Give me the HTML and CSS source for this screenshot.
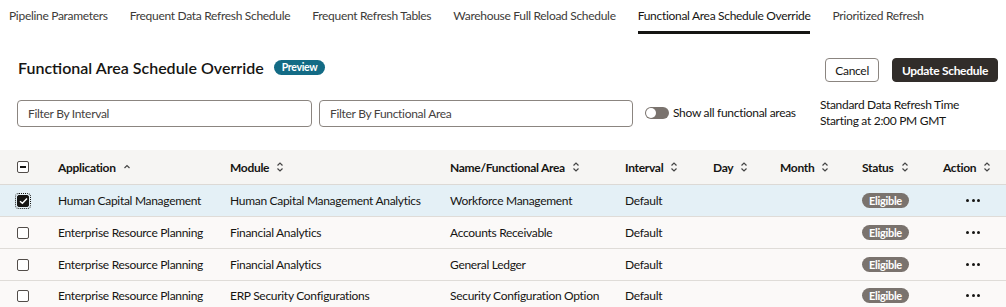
FILE: index.html
```html
<!DOCTYPE html>
<html>
<head>
<meta charset="utf-8">
<link rel="stylesheet" href="styles.css">
</head>
<body>
<nav class="tabs">
  <span class="tab">Pipeline Parameters</span>
  <span class="tab">Frequent Data Refresh Schedule</span>
  <span class="tab">Frequent Refresh Tables</span>
  <span class="tab">Warehouse Full Reload Schedule</span>
  <span class="tab active">Functional Area Schedule Override</span>
  <span class="tab">Prioritized Refresh</span>
</nav>

<header class="head">
  <div class="title-wrap">
    <h1 class="title">Functional Area Schedule Override</h1>
    <span class="badge">Preview</span>
  </div>
  <div class="actions">
    <button class="btn">Cancel</button>
    <button class="btn primary">Update Schedule</button>
  </div>
</header>

<div class="filters">
  <div class="input w1">Filter By Interval</div>
  <div class="input w2">Filter By Functional Area</div>
  <div class="toggle-wrap"><span class="toggle"><span class="knob"></span></span><span>Show all functional areas</span></div>
  <div class="std">Standard Data Refresh Time<br>Starting at 2:00 PM GMT</div>
</div>

<div class="table">
  <div class="row hdr">
    <div class="cell"><span class="cb cb-mixed"></span></div>
    <div class="cell th">Application <svg class="sort" width="10" height="10" viewBox="0 0 10 10"><path d="M2.5 6 L5 3.5 L7.5 6" fill="none" stroke="#444" stroke-width="1.2"/></svg></div>
    <div class="cell th">Module <svg class="sort" width="10" height="12" viewBox="0 0 10 12"><path d="M2.5 4.5 L5 2 L7.5 4.5 M2.5 7.5 L5 10 L7.5 7.5" fill="none" stroke="#444" stroke-width="1.2"/></svg></div>
    <div class="cell th">Name/Functional Area <svg class="sort" width="10" height="12" viewBox="0 0 10 12"><path d="M2.5 4.5 L5 2 L7.5 4.5 M2.5 7.5 L5 10 L7.5 7.5" fill="none" stroke="#444" stroke-width="1.2"/></svg></div>
    <div class="cell th">Interval <svg class="sort" width="10" height="12" viewBox="0 0 10 12"><path d="M2.5 4.5 L5 2 L7.5 4.5 M2.5 7.5 L5 10 L7.5 7.5" fill="none" stroke="#444" stroke-width="1.2"/></svg></div>
    <div class="cell th">Day <svg class="sort" width="10" height="12" viewBox="0 0 10 12"><path d="M2.5 4.5 L5 2 L7.5 4.5 M2.5 7.5 L5 10 L7.5 7.5" fill="none" stroke="#444" stroke-width="1.2"/></svg></div>
    <div class="cell th">Month <svg class="sort" width="10" height="12" viewBox="0 0 10 12"><path d="M2.5 4.5 L5 2 L7.5 4.5 M2.5 7.5 L5 10 L7.5 7.5" fill="none" stroke="#444" stroke-width="1.2"/></svg></div>
    <div class="cell th">Status <svg class="sort" width="10" height="12" viewBox="0 0 10 12"><path d="M2.5 4.5 L5 2 L7.5 4.5 M2.5 7.5 L5 10 L7.5 7.5" fill="none" stroke="#444" stroke-width="1.2"/></svg></div>
    <div class="cell th">Action <svg class="sort" width="10" height="12" viewBox="0 0 10 12"><path d="M2.5 4.5 L5 2 L7.5 4.5 M2.5 7.5 L5 10 L7.5 7.5" fill="none" stroke="#444" stroke-width="1.2"/></svg></div>
  </div>
  <div class="row sel">
    <div class="cell"><span class="cb cb-checked"><svg width="9" height="8" viewBox="0 0 9 8"><path d="M1 4.2 L3.4 6.3 L8 1.4" fill="none" stroke="#fff" stroke-width="1.5"/></svg></span></div>
    <div class="cell">Human Capital Management</div>
    <div class="cell">Human Capital Management Analytics</div>
    <div class="cell">Workforce Management</div>
    <div class="cell">Default</div>
    <div class="cell"></div>
    <div class="cell"></div>
    <div class="cell"><span class="status">Eligible</span></div>
    <div class="cell"><span class="dots"><i></i><i></i><i></i></span></div>
  </div>
  <div class="row">
    <div class="cell"><span class="cb"></span></div>
    <div class="cell">Enterprise Resource Planning</div>
    <div class="cell">Financial Analytics</div>
    <div class="cell">Accounts Receivable</div>
    <div class="cell">Default</div>
    <div class="cell"></div>
    <div class="cell"></div>
    <div class="cell"><span class="status">Eligible</span></div>
    <div class="cell"><span class="dots"><i></i><i></i><i></i></span></div>
  </div>
  <div class="row">
    <div class="cell"><span class="cb"></span></div>
    <div class="cell">Enterprise Resource Planning</div>
    <div class="cell">Financial Analytics</div>
    <div class="cell">General Ledger</div>
    <div class="cell">Default</div>
    <div class="cell"></div>
    <div class="cell"></div>
    <div class="cell"><span class="status">Eligible</span></div>
    <div class="cell"><span class="dots"><i></i><i></i><i></i></span></div>
  </div>
  <div class="row last">
    <div class="cell"><span class="cb"></span></div>
    <div class="cell">Enterprise Resource Planning</div>
    <div class="cell">ERP Security Configurations</div>
    <div class="cell">Security Configuration Option</div>
    <div class="cell">Default</div>
    <div class="cell"></div>
    <div class="cell"></div>
    <div class="cell"><span class="status">Eligible</span></div>
    <div class="cell"><span class="dots"><i></i><i></i><i></i></span></div>
  </div>
</div>
</body>
</html>
```

FILE: styles.css
```css
* { box-sizing: border-box; }
body {
  margin: 0;
  background: #fff;
  font-family: Lato, "Noto Sans", sans-serif;
  font-size: 12px;
  letter-spacing: -0.3px;
  color: #161513;
  overflow: hidden;
}
.tabs {
  display: flex;
  height: 34px;
  gap: 22px;
  padding-left: 9px;
}
.tab {
  padding-top: 8px;
  color: #3d3b39;
  white-space: nowrap;
  border-bottom: 3px solid transparent;
  height: 34px;
}
.tab.active {
  color: #161513;
  border-bottom-color: #161513;
}
.head {
  display: flex;
  justify-content: space-between;
  align-items: center;
  padding: 24px 8px 0 18px;
  height: 48px;
}
.title-wrap { display: flex; align-items: center; gap: 10px; margin-top: -6px; }
.title {
  margin: 0;
  font-size: 16px;
  font-weight: 600;
  letter-spacing: 0;
  color: #161513;
}
.badge {
  background: #136b85;
  color: #fff;
  font-size: 10.5px;
  font-weight: 700;
  border-radius: 8px;
  padding: 0 8px;
  height: 15px;
  line-height: 15px;
}
.actions { display: flex; gap: 13px; }
.btn {
  font-family: inherit;
  font-size: 12px;
  letter-spacing: -0.3px;
  height: 24px;
  border-radius: 4px;
  border: 1px solid #8b8580;
  background: #fff;
  color: #161513;
  padding: 0 9px;
}
.primary {
  background: #312d2a;
  border-color: #312d2a;
  color: #fff;
  font-weight: 700;
}
.filters {
  display: flex;
  align-items: flex-start;
  padding: 18px 0 0 17px;
  height: 68px;
}
.input {
  height: 27px;
  border: 1px solid #8b8580;
  border-radius: 4px;
  padding: 0 10px;
  line-height: 25px;
  color: #46423f;
}
.w1 { width: 295px; margin-right: 7px; }
.w2 { width: 314px; margin-right: 12px; }
.toggle-wrap {
  display: flex;
  align-items: center;
  gap: 4px;
  margin-top: 5px;
  color: #161513;
  width: 175px;
}
.toggle {
  width: 24px;
  height: 12px;
  border-radius: 6px;
  background: #7a736e;
  position: relative;
  display: inline-block;
}
.knob {
  position: absolute;
  left: 1px;
  top: 1px;
  width: 10px;
  height: 10px;
  border-radius: 50%;
  background: #fff;
}
.std { line-height: 16px; margin-top: -3px; color: #161513; }
.table { width: 1006px; }
.row {
  display: grid;
  grid-template-columns: 46px 172px 220px 175px 88px 67px 82px 81px 75px;
  height: 32px;
  align-items: center;
  background: #fbf9f8;
  border-bottom: 1px solid #dfdcd8;
}
.row.last { height: 30px; }
.row.hdr {
  height: 35px;
  background: #f6f5f3;
  border-bottom: 1px solid #dcd9d5;
}
.row.sel { background: #e4f0f6; }
.cell {
  padding-left: 12px;
  white-space: nowrap;
  display: flex;
  align-items: center;
}
.cell:first-child { padding-left: 17px; }
.th { font-weight: 700; gap: 6px; }
.sort { display: block; }
.cb {
  width: 12px;
  height: 12px;
  border: 1.5px solid #524d49;
  border-radius: 2px;
  background: #fff;
  display: inline-flex;
  align-items: center;
  justify-content: center;
}
.cb-mixed::after {
  content: "";
  width: 6px;
  height: 1.5px;
  background: #161513;
}
.cb-checked {
  background: #161513;
  border-color: #161513;
  outline: 1px dotted #161513;
  outline-offset: 1px;
}
.status {
  background: #7a736e;
  color: #fff;
  font-size: 11px;
  font-weight: 700;
  border-radius: 8px;
  height: 15px;
  line-height: 15px;
  padding: 0 7px;
}
.dots {
  display: flex;
  gap: 2.5px;
  margin-left: 23px;
}
.dots i {
  width: 3px;
  height: 3px;
  border-radius: 50%;
  background: #161513;
  display: block;
}
```
